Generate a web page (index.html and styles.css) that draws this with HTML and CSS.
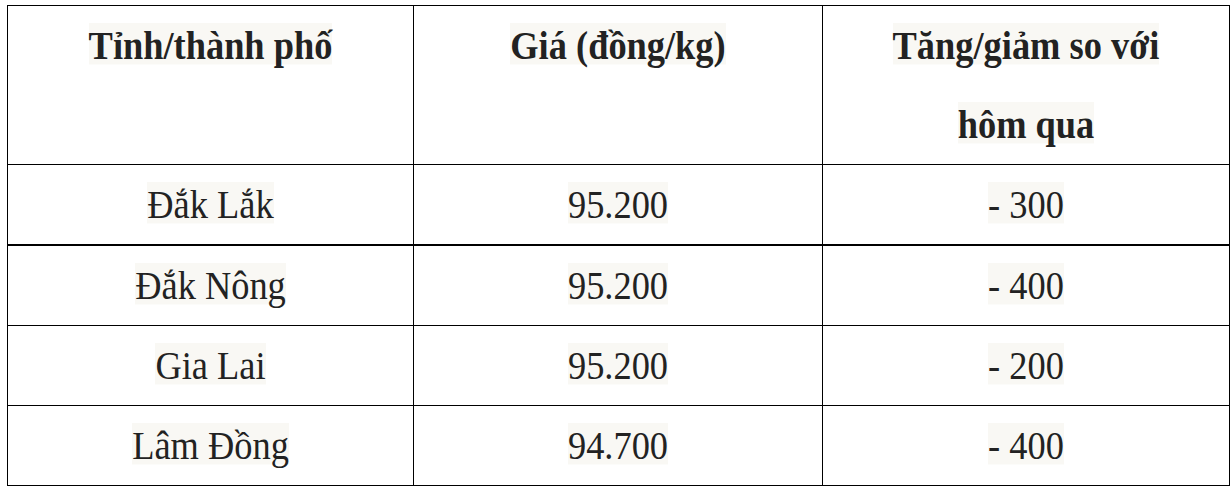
FILE: index.html
```html
<!DOCTYPE html>
<html lang="vi">
<head>
<meta charset="utf-8">
<title>Giá cà phê</title>
<link rel="stylesheet" href="styles.css">
</head>
<body>
<table class="price">
  <colgroup>
    <col class="c1">
    <col class="c2">
    <col class="c3">
  </colgroup>
  <thead>
    <tr>
      <th><div class="ln"><span class="hl">Tỉnh/thành phố</span></div></th>
      <th><div class="ln"><span class="hl">Giá (đồng/kg)</span></div></th>
      <th><div class="ln"><span class="hl">Tăng/giảm so với</span></div><div class="ln"><span class="hl">hôm qua</span></div></th>
    </tr>
  </thead>
  <tbody>
    <tr class="first">
      <td><div class="ln"><span class="hl">Đắk Lắk</span></div></td>
      <td><div class="ln"><span class="hl">95.200</span></div></td>
      <td><div class="ln"><span class="hl">- 300</span></div></td>
    </tr>
    <tr>
      <td><div class="ln"><span class="hl">Đắk Nông</span></div></td>
      <td><div class="ln"><span class="hl">95.200</span></div></td>
      <td><div class="ln"><span class="hl">- 400</span></div></td>
    </tr>
    <tr>
      <td><div class="ln"><span class="hl">Gia Lai</span></div></td>
      <td><div class="ln"><span class="hl">95.200</span></div></td>
      <td><div class="ln"><span class="hl">- 200</span></div></td>
    </tr>
    <tr>
      <td><div class="ln"><span class="hl">Lâm Đồng</span></div></td>
      <td><div class="ln"><span class="hl">94.700</span></div></td>
      <td><div class="ln"><span class="hl">- 400</span></div></td>
    </tr>
  </tbody>
</table>
</body>
</html>
```
FILE: styles.css
```css
html, body {
  margin: 0;
  padding: 0;
  background: #ffffff;
}

body {
  font-family: "Liberation Serif", "Times New Roman", serif;
  color: #222222;
  font-size: 36.4px;
}

.price {
  border-collapse: collapse;
  table-layout: fixed;
  width: 1222px;
  margin: 5px 0 0 7px;
}

.c1 { width: 406px; }
.c2 { width: 409px; }
.c3 { width: 407px; }

.price th,
.price td {
  border: 1px solid #000000;
  padding: 0;
  text-align: center;
  vertical-align: top;
}

.price th {
  font-weight: bold;
  height: 158px;
}

.price td {
  font-weight: normal;
  height: 79px;
}

.price tr.first td {
  border-bottom-width: 2px;
}

.ln {
  height: 78.5px;
  padding-top: 16px;
  box-sizing: border-box;
}

.hl {
  display: inline-block;
  background: #f9f8f4;
  line-height: 38px;
  padding-top: 1px;
  height: 37px;
  box-sizing: border-box;
  transform: scaleY(1.12);
  transform-origin: top center;
  white-space: nowrap;
}
```
